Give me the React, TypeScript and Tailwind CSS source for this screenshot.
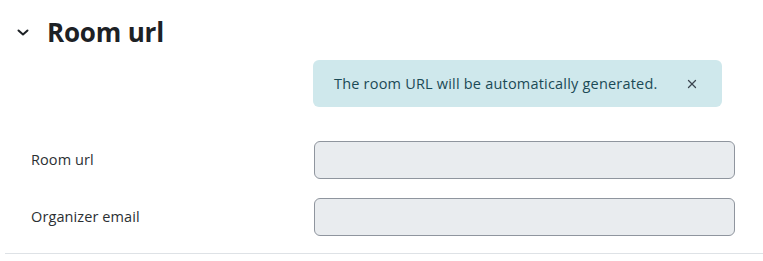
import { X } from 'lucide-react';

// Collapsible form section header
function SectionHeader({ title }: { title: string }) {
  return (
    <div className="flex items-center h-[64px] pl-[15px]">
      <svg width="16" height="16" viewBox="0 0 16 16" className="text-[#1d2125]">
        <path d="M3.5 6.5l4.5 4 4.5-4" fill="none" stroke="currentColor" strokeWidth="2" strokeLinecap="round" strokeLinejoin="round" />
      </svg>
      <h3 className="ml-[16px] text-[26px] font-bold text-[#1d2125] leading-none tracking-[-0.2px]">{title}</h3>
    </div>
  );
}

function FieldRow({ label }: { label: string }) {
  return (
    <div className="flex items-center h-[38px]">
      <label className="w-[314px] pl-[31px] text-[14.5px] tracking-[0.1px] text-[#2b2f33]">{label}</label>
      <div className="w-[421px] h-[38px] rounded-[6px] border border-[#8f959e] bg-[#e9ecef]" />
    </div>
  );
}

export default function App() {
  return (
    <div className="w-[763px] h-[261px] bg-white font-['Open_Sans',sans-serif] overflow-hidden">
      <SectionHeader title="Room url" />

      <div className="flex mt-[-4px]">
        <div className="w-[313px]" />
        <div className="flex items-center justify-between w-[409px] h-[47px] rounded-[6px] bg-[#cfe8ec] pl-[21px] pr-[23px]">
          <span className="text-[14.5px] tracking-[0.2px] text-[#1b4a56]">The room URL will be automatically generated.</span>
          <X size={14} strokeWidth={2.2} className="text-[#3c4650]" />
        </div>
      </div>

      <div className="flex flex-col gap-[19px] mt-[34px]">
        <FieldRow label="Room url" />
        <FieldRow label="Organizer email" />
      </div>

      <div className="ml-[5px] mt-[17px] h-px bg-[#dee2e6]" />
    </div>
  );
}
